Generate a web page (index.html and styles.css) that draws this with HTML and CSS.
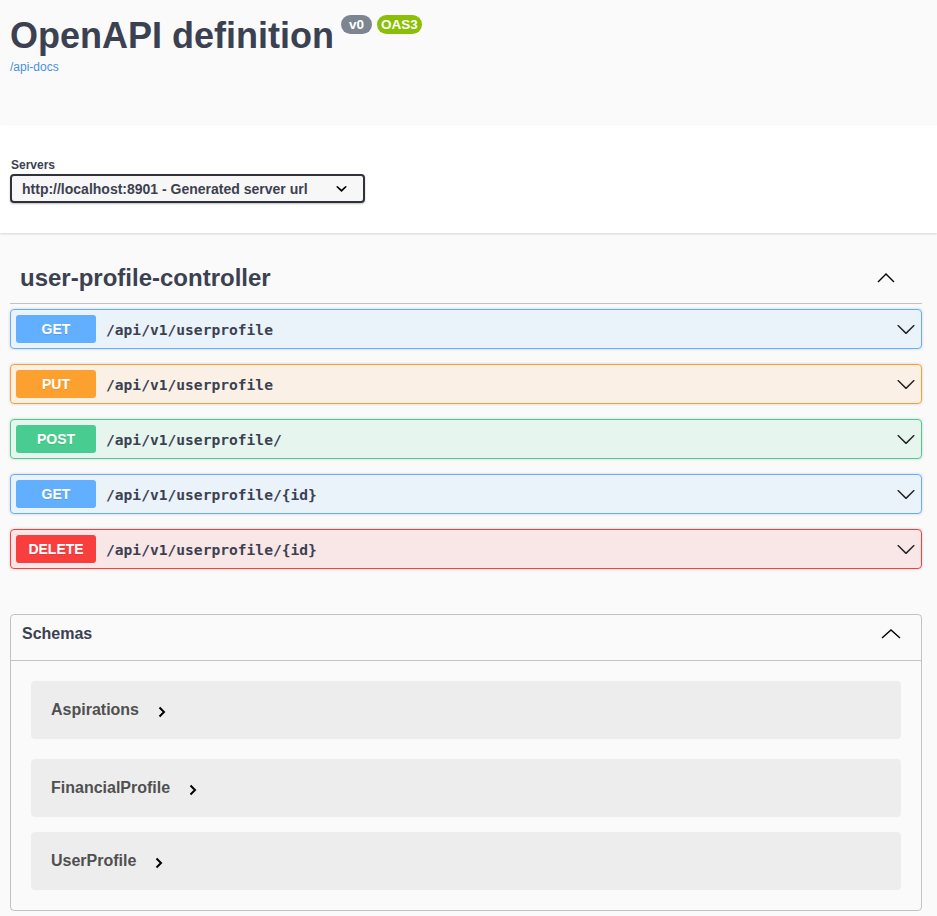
FILE: index.html
```html
<!DOCTYPE html>
<html>
<head>
<meta charset="utf-8">
<title>Swagger UI</title>
<link rel="stylesheet" href="styles.css">
</head>
<body>
<div class="info">
  <div class="title-row">
    <h2 class="title">OpenAPI definition</h2>
    <span class="badge badge-version">v0</span>
    <span class="badge badge-oas">OAS3</span>
  </div>
  <a class="docs-link" href="#">/api-docs</a>
</div>

<div class="scheme">
  <span class="servers-label">Servers</span>
  <div class="select">
    <span>http://localhost:8901 - Generated server url</span>
    <svg class="select-arrow" width="11" height="11" viewBox="0 0 20 20"><path d="M13.418 7.859a.695.695 0 01.978 0 .68.68 0 010 .969l-3.908 3.83a.697.697 0 01-.979 0l-3.908-3.83a.68.68 0 010-.969.695.695 0 01.978 0L10 11z" transform="translate(-10 -10) scale(2)"/></svg>
  </div>
</div>

<div class="content">
  <div class="tag">
    <h3 class="tag-title">user-profile-controller</h3>
    <svg class="chev-up" width="20" height="20" viewBox="0 0 20 20"><polyline points="2,14 10,6 18,14" fill="none" stroke="#000" stroke-width="1.4"/></svg>
  </div>

  <div class="opblock get">
    <span class="method">GET</span>
    <span class="path">/api/v1/userprofile</span>
    <svg class="arrow" width="20" height="20" viewBox="0 0 20 20"><path d="M17.418 6.109c.272-.268.709-.268.979 0s.271.701 0 .969l-7.908 7.83c-.27.268-.707.268-.979 0l-7.908-7.83c-.27-.268-.27-.701 0-.969.271-.268.709-.268.979 0L10 13.25l7.418-7.141z"/></svg>
  </div>
  <div class="opblock put">
    <span class="method">PUT</span>
    <span class="path">/api/v1/userprofile</span>
    <svg class="arrow" width="20" height="20" viewBox="0 0 20 20"><path d="M17.418 6.109c.272-.268.709-.268.979 0s.271.701 0 .969l-7.908 7.83c-.27.268-.707.268-.979 0l-7.908-7.83c-.27-.268-.27-.701 0-.969.271-.268.709-.268.979 0L10 13.25l7.418-7.141z"/></svg>
  </div>
  <div class="opblock post">
    <span class="method">POST</span>
    <span class="path">/api/v1/userprofile/</span>
    <svg class="arrow" width="20" height="20" viewBox="0 0 20 20"><path d="M17.418 6.109c.272-.268.709-.268.979 0s.271.701 0 .969l-7.908 7.83c-.27.268-.707.268-.979 0l-7.908-7.830c-.27-.268-.27-.701 0-.969.271-.268.709-.268.979 0L10 13.25l7.418-7.141z"/></svg>
  </div>
  <div class="opblock get">
    <span class="method">GET</span>
    <span class="path">/api/v1/userprofile/{id}</span>
    <svg class="arrow" width="20" height="20" viewBox="0 0 20 20"><path d="M17.418 6.109c.272-.268.709-.268.979 0s.271.701 0 .969l-7.908 7.83c-.27.268-.707.268-.979 0l-7.908-7.83c-.27-.268-.27-.701 0-.969.271-.268.709-.268.979 0L10 13.25l7.418-7.141z"/></svg>
  </div>
  <div class="opblock delete">
    <span class="method">DELETE</span>
    <span class="path">/api/v1/userprofile/{id}</span>
    <svg class="arrow" width="20" height="20" viewBox="0 0 20 20"><path d="M17.418 6.109c.272-.268.709-.268.979 0s.271.701 0 .969l-7.908 7.83c-.27.268-.707.268-.979 0l-7.908-7.83c-.27-.268-.27-.701 0-.969.271-.268.709-.268.979 0L10 13.25l7.418-7.141z"/></svg>
  </div>

  <section class="models">
    <div class="models-header">
      <span>Schemas</span>
      <svg class="chev-up" width="20" height="20" viewBox="0 0 20 20"><polyline points="1,14 10,6 19,14" fill="none" stroke="#000" stroke-width="1.4"/></svg>
    </div>
    <div class="model">
      <span>Aspirations</span>
      <svg class="model-chev" width="8" height="12" viewBox="0 0 8 12"><polyline points="1.5,1.5 6,6 1.5,10.5" fill="none" stroke="#000" stroke-width="2"/></svg>
    </div>
    <div class="model">
      <span>FinancialProfile</span>
      <svg class="model-chev" width="8" height="12" viewBox="0 0 8 12"><polyline points="1.5,1.5 6,6 1.5,10.5" fill="none" stroke="#000" stroke-width="2"/></svg>
    </div>
    <div class="model">
      <span>UserProfile</span>
      <svg class="model-chev" width="8" height="12" viewBox="0 0 8 12"><polyline points="1.5,1.5 6,6 1.5,10.5" fill="none" stroke="#000" stroke-width="2"/></svg>
    </div>
  </section>
</div>
</body>
</html>
```

FILE: styles.css
```css
body {
  margin: 0;
  background: #fafafa;
  font-family: "Liberation Sans", Arial, sans-serif;
  color: #3b4151;
}

.info {
  height: 125px;
  box-sizing: border-box;
  padding: 15px 10px 0;
}

.title-row {
  display: flex;
  align-items: flex-start;
}

.title {
  margin: 0;
  font-size: 36px;
  font-weight: 700;
  line-height: 41px;
  color: #3b4151;
}

.badge {
  height: 19px;
  line-height: 19px;
  font-size: 13.5px;
  font-weight: 700;
  color: #fff;
  border-radius: 57px;
}

.badge-version {
  background: #7d8492;
  padding: 0 8px;
  margin-left: 7px;
}

.badge-oas {
  background: #89bf04;
  padding: 0 4px;
  margin-left: 5px;
}

.docs-link {
  display: inline-block;
  margin-top: 4px;
  font-size: 12px;
  line-height: 14px;
  color: #4990e2;
  text-decoration: none;
}

.scheme {
  background: #fff;
  box-shadow: 0 1px 2px 0 rgba(0, 0, 0, 0.15);
  padding: 33px 10px 30px;
}

.servers-label {
  display: block;
  padding-left: 1px;
  font-size: 12px;
  font-weight: 700;
  line-height: 14px;
  color: #3b4151;
}

.select {
  margin-top: 2px;
  width: 355px;
  height: 29px;
  box-sizing: border-box;
  border: 2px solid #2f323a;
  border-radius: 4px;
  background: #f7f7f7;
  box-shadow: 0 1px 2px 0 rgba(0, 0, 0, 0.25);
  display: flex;
  align-items: center;
  justify-content: space-between;
  padding: 0 16px 0 10px;
  font-size: 14px;
  font-weight: 700;
  color: #3b4151;
}

.select-arrow {
  fill: #000;
}

.content {
  padding: 20px 15px 0 10px;
}

.tag {
  display: flex;
  align-items: center;
  justify-content: space-between;
  height: 50px;
  padding: 0 26px 0 10px;
  border-bottom: 1px solid rgba(59, 65, 81, 0.3);
  margin-bottom: 5px;
}

.tag-title {
  margin: 0;
  font-size: 24px;
  font-weight: 700;
  color: #3b4151;
}

.opblock {
  display: flex;
  align-items: center;
  height: 40px;
  box-sizing: border-box;
  padding: 0 5px;
  border: 1px solid;
  border-radius: 4px;
  margin-bottom: 15px;
  box-shadow: 0 0 3px rgba(0, 0, 0, 0.19);
}

.method {
  width: 80px;
  height: 28px;
  border-radius: 3px;
  display: flex;
  align-items: center;
  justify-content: center;
  color: #fff;
  font-size: 14px;
  font-weight: 700;
  text-shadow: 0 1px 0 rgba(0, 0, 0, 0.1);
}

.path {
  flex: 1;
  padding: 0 10px;
  font-family: "DejaVu Sans Mono", "Liberation Mono", monospace;
  font-size: 14.6px;
  font-weight: 700;
  color: #3b4151;
}

.arrow {
  fill: #222;
}

.get { border-color: #61affe; background: rgba(97, 175, 254, 0.1); }
.get .method { background: #61affe; }
.put { border-color: #fca130; background: rgba(252, 161, 48, 0.1); }
.put .method { background: #fca130; }
.post { border-color: #49cc90; background: rgba(73, 204, 144, 0.1); }
.post .method { background: #49cc90; }
.delete { border-color: #f93e3e; background: rgba(249, 62, 62, 0.1); }
.delete .method { background: #f93e3e; }

.models {
  margin-top: 45px;
  border: 1px solid rgba(59, 65, 81, 0.3);
  border-radius: 4px;
  padding-bottom: 20px;
}

.models-header {
  display: flex;
  align-items: center;
  justify-content: space-between;
  height: 46px;
  box-sizing: border-box;
  padding: 0 20px 7px 11px;
  border-bottom: 1px solid rgba(59, 65, 81, 0.3);
  font-size: 16px;
  font-weight: 700;
  color: #3b4151;
}

.model {
  display: flex;
  align-items: center;
  height: 58px;
  box-sizing: border-box;
  margin: 0 20px 15px;
  padding: 0 20px;
  background: rgba(0, 0, 0, 0.05);
  border-radius: 4px;
  font-size: 16px;
  font-weight: 700;
  color: #505050;
}

.model:nth-child(2) {
  margin-top: 20px;
  margin-bottom: 20px;
}

.model:last-child {
  margin-bottom: 0;
}

.model-chev {
  margin-left: 19px;
  margin-top: 3px;
}
```
